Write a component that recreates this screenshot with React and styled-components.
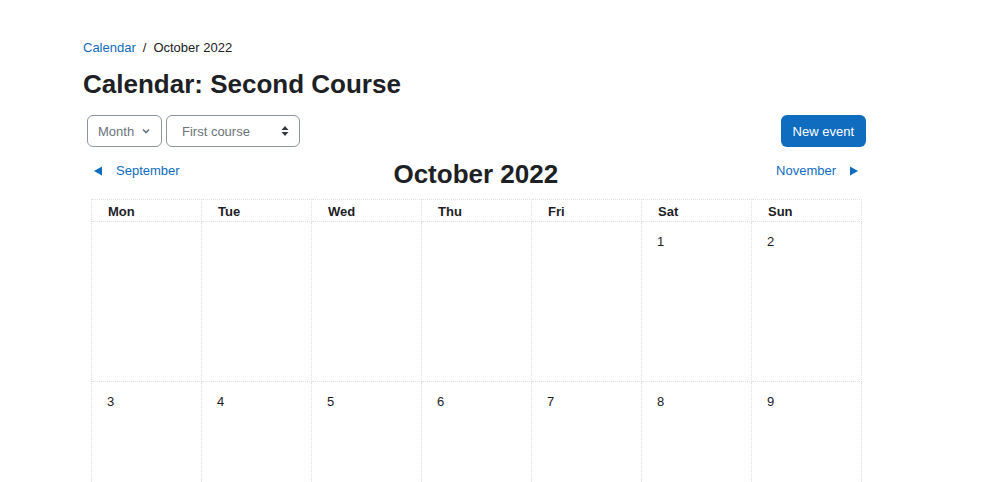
import React from 'react'
import styled, { createGlobalStyle } from 'styled-components'

const GlobalStyle = createGlobalStyle`
    body {
        margin: 0;
        background: #fff;
        font-family: "Liberation Sans", Arial, sans-serif;
        color: #1d2125;
        overflow: hidden;
    }
`

const Page = styled.div`
    width: 783px;
    margin-left: 83px;
    padding-top: 40px;
`

const Crumbs = styled.nav`
    display: flex;
    align-items: center;
    font-size: 13px;
    line-height: 16px;
    gap: 7px;
`

const Link = styled.a`
    color: #0f6cbf;
    text-decoration: none;
`

const Title = styled.h2`
    font-size: 26px;
    font-weight: bold;
    margin: 13px 0 16px;
    line-height: 30px;
`

const Controls = styled.div`
    display: flex;
    align-items: center;
    padding-left: 4px;
    gap: 4px;
`

const Select = styled.div`
    display: flex;
    align-items: center;
    justify-content: space-between;
    box-sizing: border-box;
    width: ${props => props.w}px;
    height: 32px;
    padding: 0 ${props => props.pr}px 0 ${props => props.pl}px;
    border: 1px solid #8f959e;
    border-radius: 6px;
    font-size: 13px;
    color: #6a737b;
`

const Button = styled.button`
    margin-left: auto;
    height: 32px;
    padding: 0 12px;
    border: none;
    border-radius: 6px;
    background: #0f6cbf;
    color: #fff;
    font-family: inherit;
    font-size: 13px;
`

const NavRow = styled.div`
    display: flex;
    align-items: center;
    justify-content: space-between;
    padding: 3px 7px 0 10px;
    height: 49px;
    font-size: 13px;
`

const NavLink = styled.a`
    display: flex;
    align-items: center;
    gap: 13px;
    color: #0f6cbf;
    text-decoration: none;
    margin-top: -8px;
`

const Month = styled.h2`
    font-size: 26px;
    font-weight: bold;
    margin: 0;
    padding-right: 4px;
`

const Table = styled.div`
    display: grid;
    grid-template-columns: repeat(7, 110px);
    grid-template-rows: 23px 160px 160px;
    margin-left: 8px;
    border-left: 1px dotted #dee2e6;
`

const Head = styled.div`
    border-top: 1px dotted #dee2e6;
    border-right: 1px dotted #dee2e6;
    border-bottom: 1px dotted #dee2e6;
    font-size: 13px;
    font-weight: bold;
    padding: 4px 0 0 16px;
`

const Day = styled.div`
    border-right: 1px dotted #dee2e6;
    border-bottom: 1px dotted #dee2e6;
    font-size: 13px;
    padding: 12px 0 0 15px;
`

const Chevron = () => (
    <svg width="10" height="10" viewBox="0 0 10 10">
        <path d="M2 3.5 L5 6.5 L8 3.5" fill="none" stroke="#6a737b" strokeWidth="1.6" />
    </svg>
)

const Updown = () => (
    <svg width="8" height="12" viewBox="0 0 8 12">
        <path d="M4 1 L7.5 5 H0.5 Z M4 11 L7.5 7 H0.5 Z" fill="#343a40" />
    </svg>
)

const Tri = ({ left }) => (
    <svg width="10" height="10" viewBox="0 0 10 10">
        <path d={left ? 'M9 0.5 V9.5 L1 5 Z' : 'M1 0.5 V9.5 L9 5 Z'} fill="#0f6cbf" />
    </svg>
)

const days = ['Mon', 'Tue', 'Wed', 'Thu', 'Fri', 'Sat', 'Sun']
const cells = ['', '', '', '', '', '1', '2', '3', '4', '5', '6', '7', '8', '9']

function App () {
    return (
        <Page>
            <GlobalStyle />
            <Crumbs>
                <Link href="#">Calendar</Link>
                <span>/</span>
                <span>October 2022</span>
            </Crumbs>
            <Title>Calendar: Second Course</Title>
            <Controls>
                <Select w={75} pl={10} pr={10}>Month <Chevron /></Select>
                <Select w={134} pl={15} pr={10}>First course <Updown /></Select>
                <Button>New event</Button>
            </Controls>
            <NavRow>
                <NavLink href="#"><Tri left /> September</NavLink>
                <Month>October 2022</Month>
                <NavLink href="#">November <Tri /></NavLink>
            </NavRow>
            <Table>
                {days.map(d => <Head key={d}>{d}</Head>)}
                {cells.map((c, i) => <Day key={i}>{c}</Day>)}
            </Table>
        </Page>
    )
}

export default App
